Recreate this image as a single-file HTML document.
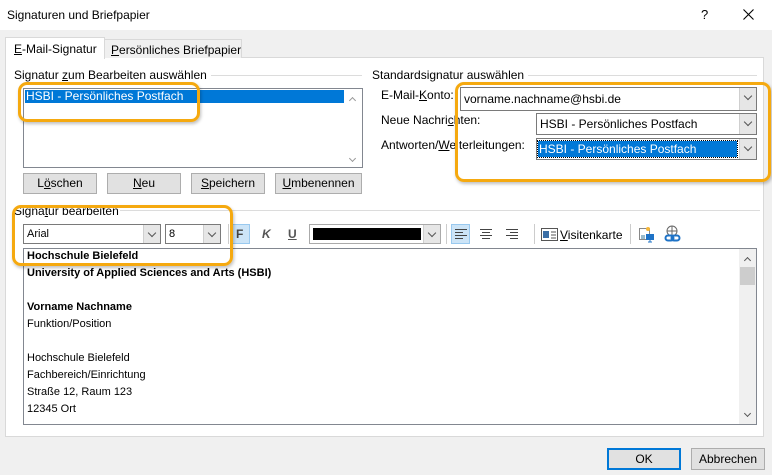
<!DOCTYPE html>
<html><head><meta charset="utf-8"><style>
*{box-sizing:border-box;margin:0;padding:0}
body{width:772px;height:475px;background:#f0f0f0;font-family:"Segoe UI","Liberation Sans",sans-serif;font-size:12px;color:#000;position:relative;overflow:hidden}
.a{position:absolute}
.t{position:absolute;white-space:nowrap;line-height:14px}
.btn{position:absolute;background:#e1e1e1;border:1px solid #adadad;text-align:center;line-height:19px;height:21px}
.cb{position:absolute;background:#fff;border:1px solid #7a7a7a;height:22px}
.cb .dd{position:absolute;right:0;top:0;bottom:0;width:17px;background:#e6e6e6;border-left:1px solid #cfcfcf}
.cb .dd:after{content:"";position:absolute;left:5px;top:5px;width:5px;height:5px;border-right:1px solid #555;border-bottom:1px solid #555;transform:rotate(45deg)}
.or{position:absolute;border:3px solid #f5a90f;border-radius:9px;box-shadow:1px 2px 3px rgba(0,0,0,.25)}
.ed{font-family:"Liberation Sans",Arial,sans-serif;font-size:11px;position:absolute;left:27px;white-space:nowrap}
.sep{position:absolute;width:1px;height:20px;background:#ccc}
.up,.dn{position:absolute;width:5px;height:5px;border-left:1px solid #999;border-top:1px solid #999}
.up{transform:rotate(45deg)}.dn{transform:rotate(225deg)}
u{text-decoration:underline}
</style></head><body>
<div class="a" style="left:0;top:0;width:772px;height:30px;background:#fff"></div>
<div class="t" style="left:7px;top:8px">Signaturen und Briefpapier</div>
<div class="t" style="left:701px;top:8px;font-size:13px">?</div>
<svg class="a" style="left:743px;top:9px" width="11" height="11"><path d="M.5 .5l10 10M10.5 .5l-10 10" stroke="#000" stroke-width="1.1"/></svg>
<div class="a" style="left:5px;top:57px;width:759px;height:380px;background:#fff;border:1px solid #d9d9d9"></div>
<div class="a" style="left:104px;top:39px;width:138px;height:19px;background:#f0f0f0;border:1px solid #d9d9d9;border-bottom:none"></div>
<div class="t" style="left:111px;top:43px"><u>P</u>ersönliches Briefpapier</div>
<div class="a" style="left:5px;top:37px;width:100px;height:22px;background:#fff;border:1px solid #d9d9d9;border-bottom:none"></div>
<div class="t" style="left:14px;top:42px"><u>E</u>-Mail-Signatur</div>
<div class="a" style="left:205px;top:75px;width:157px;height:1px;background:#dcdcdc"></div>
<div class="t" style="left:14px;top:68px;background:#fff;padding-right:4px">Signatur <u>z</u>um Bearbeiten auswählen</div>
<div class="a" style="left:23px;top:88px;width:340px;height:80px;border:1px solid #828790;background:#fff"></div>
<div class="a" style="left:25px;top:90px;width:319px;height:13px;background:#0078d7"></div>
<div class="t" style="left:26px;top:90px;color:#fff;line-height:13px">HSBI - Persönliches Postfach</div>
<div class="up" style="left:350px;top:98px"></div>
<div class="dn" style="left:350px;top:156px"></div>
<div class="btn" style="left:23px;top:173px;width:74px">L<u>ö</u>schen</div>
<div class="btn" style="left:107px;top:173px;width:74px"><u>N</u>eu</div>
<div class="btn" style="left:191px;top:173px;width:74px"><u>S</u>peichern</div>
<div class="btn" style="left:275px;top:173px;width:87px"><u>U</u>mbenennen</div>
<div class="or" style="left:18px;top:82px;width:182px;height:40px"></div>
<div class="a" style="left:528px;top:75px;width:229px;height:1px;background:#dcdcdc"></div>
<div class="t" style="left:372px;top:68px">Standardsignatur auswählen</div>
<div class="t" style="left:381px;top:88px">E-Mail-<u>K</u>onto:</div>
<div class="t" style="left:381px;top:113px">Neue Nachri<u>c</u>hten:</div>
<div class="t" style="left:381px;top:138px">Antworten/<u>W</u>eiterleitungen:</div>
<div class="cb" style="left:460px;top:87px;width:297px;height:24px"><span class="t" style="left:3px;top:4px">vorname.nachname@hsbi.de</span><div class="dd"></div></div>
<div class="cb" style="left:536px;top:113px;width:221px;height:22px"><span class="t" style="left:3px;top:3px">HSBI - Persönliches Postfach</span><div class="dd"></div></div>
<div class="cb" style="left:536px;top:138px;width:221px;height:22px"><div class="a" style="left:1px;top:2px;width:199px;height:16px;background:#0078d7;outline:1px dotted #000"></div><span class="t" style="left:2px;top:3px;color:#fff">HSBI - Persönliches Postfach</span><div class="dd"></div></div>
<div class="or" style="left:455px;top:82px;width:316px;height:100px"></div>
<div class="a" style="left:120px;top:210px;width:640px;height:1px;background:#dcdcdc"></div>
<div class="t" style="left:14px;top:204px">Signa<u>t</u>ur bearbeiten</div>
<div class="cb" style="left:23px;top:224px;width:138px;height:20px"><span class="t" style="left:3px;top:2px;font-family:'Liberation Sans',sans-serif;font-size:11px">Arial</span><div class="dd"></div></div>
<div class="cb" style="left:165px;top:224px;width:56px;height:20px"><span class="t" style="left:3px;top:2px;font-family:'Liberation Sans',sans-serif;font-size:11px">8</span><div class="dd"></div></div>
<div class="sep" style="left:228px;top:224px"></div>
<div class="a" style="left:231px;top:224px;width:19px;height:20px;background:#cce4f7;border:1px solid #99c9ef"></div>
<div class="t" style="left:236px;top:227px;font-weight:bold;color:#444">F</div>
<div class="t" style="left:262px;top:227px;font-weight:bold;font-style:italic;color:#555">K</div>
<div class="t" style="left:288px;top:227px;font-weight:bold;color:#555;text-decoration:underline">U</div>
<div class="cb" style="left:309px;top:224px;width:132px;height:20px;border-color:#aaa"><div class="a" style="left:3px;top:3px;width:108px;height:12px;background:#000"></div><div class="dd"></div></div>
<div class="sep" style="left:446px;top:224px"></div>
<div class="a" style="left:451px;top:224px;width:19px;height:20px;background:#cce4f7;border:1px solid #99c9ef"></div>
<svg class="a" style="left:453px;top:228px" width="110" height="12"><g stroke="#444" stroke-width="1"><path d="M2 1.5h12M2 4.5h8M2 7.5h12M2 10.5h8"/><path d="M27 1.5h12M29 4.5h8M27 7.5h12M29 10.5h8"/><path d="M53 1.5h12M57 4.5h8M53 7.5h12M57 10.5h8"/></g></svg>
<div class="sep" style="left:534px;top:224px"></div>
<svg class="a" style="left:541px;top:228px" width="18" height="13"><rect x=".5" y=".5" width="16" height="12" fill="#fff" stroke="#555"/><rect x="2" y="3" width="6" height="7" fill="#3a6ea5"/><path d="M10 4h5M10 7h5M10 10h5" stroke="#555"/></svg>
<div class="t" style="left:560px;top:228px"><u>V</u>isitenkarte</div>
<div class="sep" style="left:630px;top:224px"></div>
<svg class="a" style="left:639px;top:226px" width="16" height="17"><rect x=".5" y="2.5" width="10" height="11" fill="#fff" stroke="#888"/><rect x="2" y="9" width="4" height="4" fill="#9bc"/><circle cx="9" cy="3" r="2" fill="#f5b73b"/><rect x="7" y="8" width="8" height="6" fill="#1f73c7"/><path d="M11 14v2M9 16h4" stroke="#1f73c7"/></svg>
<svg class="a" style="left:664px;top:225px" width="17" height="18"><circle cx="8" cy="6" r="5" fill="none" stroke="#666"/><path d="M3 6h10M8 1v10" stroke="#666"/><rect x="1.5" y="10.5" width="8" height="5" rx="2.5" fill="none" stroke="#1f73c7" stroke-width="2"/><rect x="7.5" y="10.5" width="8" height="5" rx="2.5" fill="none" stroke="#1f73c7" stroke-width="2"/></svg>
<div class="a" style="left:23px;top:248px;width:734px;height:177px;border:1px solid #828790;background:#fff"></div>
<div class="a" style="left:739px;top:249px;width:17px;height:175px;background:#f0f0f0"></div>
<div class="a" style="left:740px;top:267px;width:15px;height:18px;background:#cdcdcd"></div>
<div class="up" style="left:745px;top:258px;border-color:#555"></div>
<div class="dn" style="left:745px;top:411px;border-color:#555"></div>
<div class="ed" style="top:250px;font-weight:bold">Hochschule Bielefeld</div>
<div class="ed" style="top:267px;font-weight:bold">University of Applied Sciences and Arts (HSBI)</div>
<div class="ed" style="top:301px;font-weight:bold">Vorname Nachname</div>
<div class="ed" style="top:318px">Funktion/Position</div>
<div class="ed" style="top:352px">Hochschule Bielefeld</div>
<div class="ed" style="top:369px">Fachbereich/Einrichtung</div>
<div class="ed" style="top:386px">Straße 12, Raum 123</div>
<div class="ed" style="top:403px">12345 Ort</div>
<div class="or" style="left:12px;top:205px;width:221px;height:61px"></div>
<div class="btn" style="left:607px;top:448px;width:74px;height:22px;border:2px solid #0078d7;line-height:18px">OK</div>
<div class="btn" style="left:691px;top:448px;width:74px;height:22px;line-height:20px">Abbrechen</div>
</body></html>
